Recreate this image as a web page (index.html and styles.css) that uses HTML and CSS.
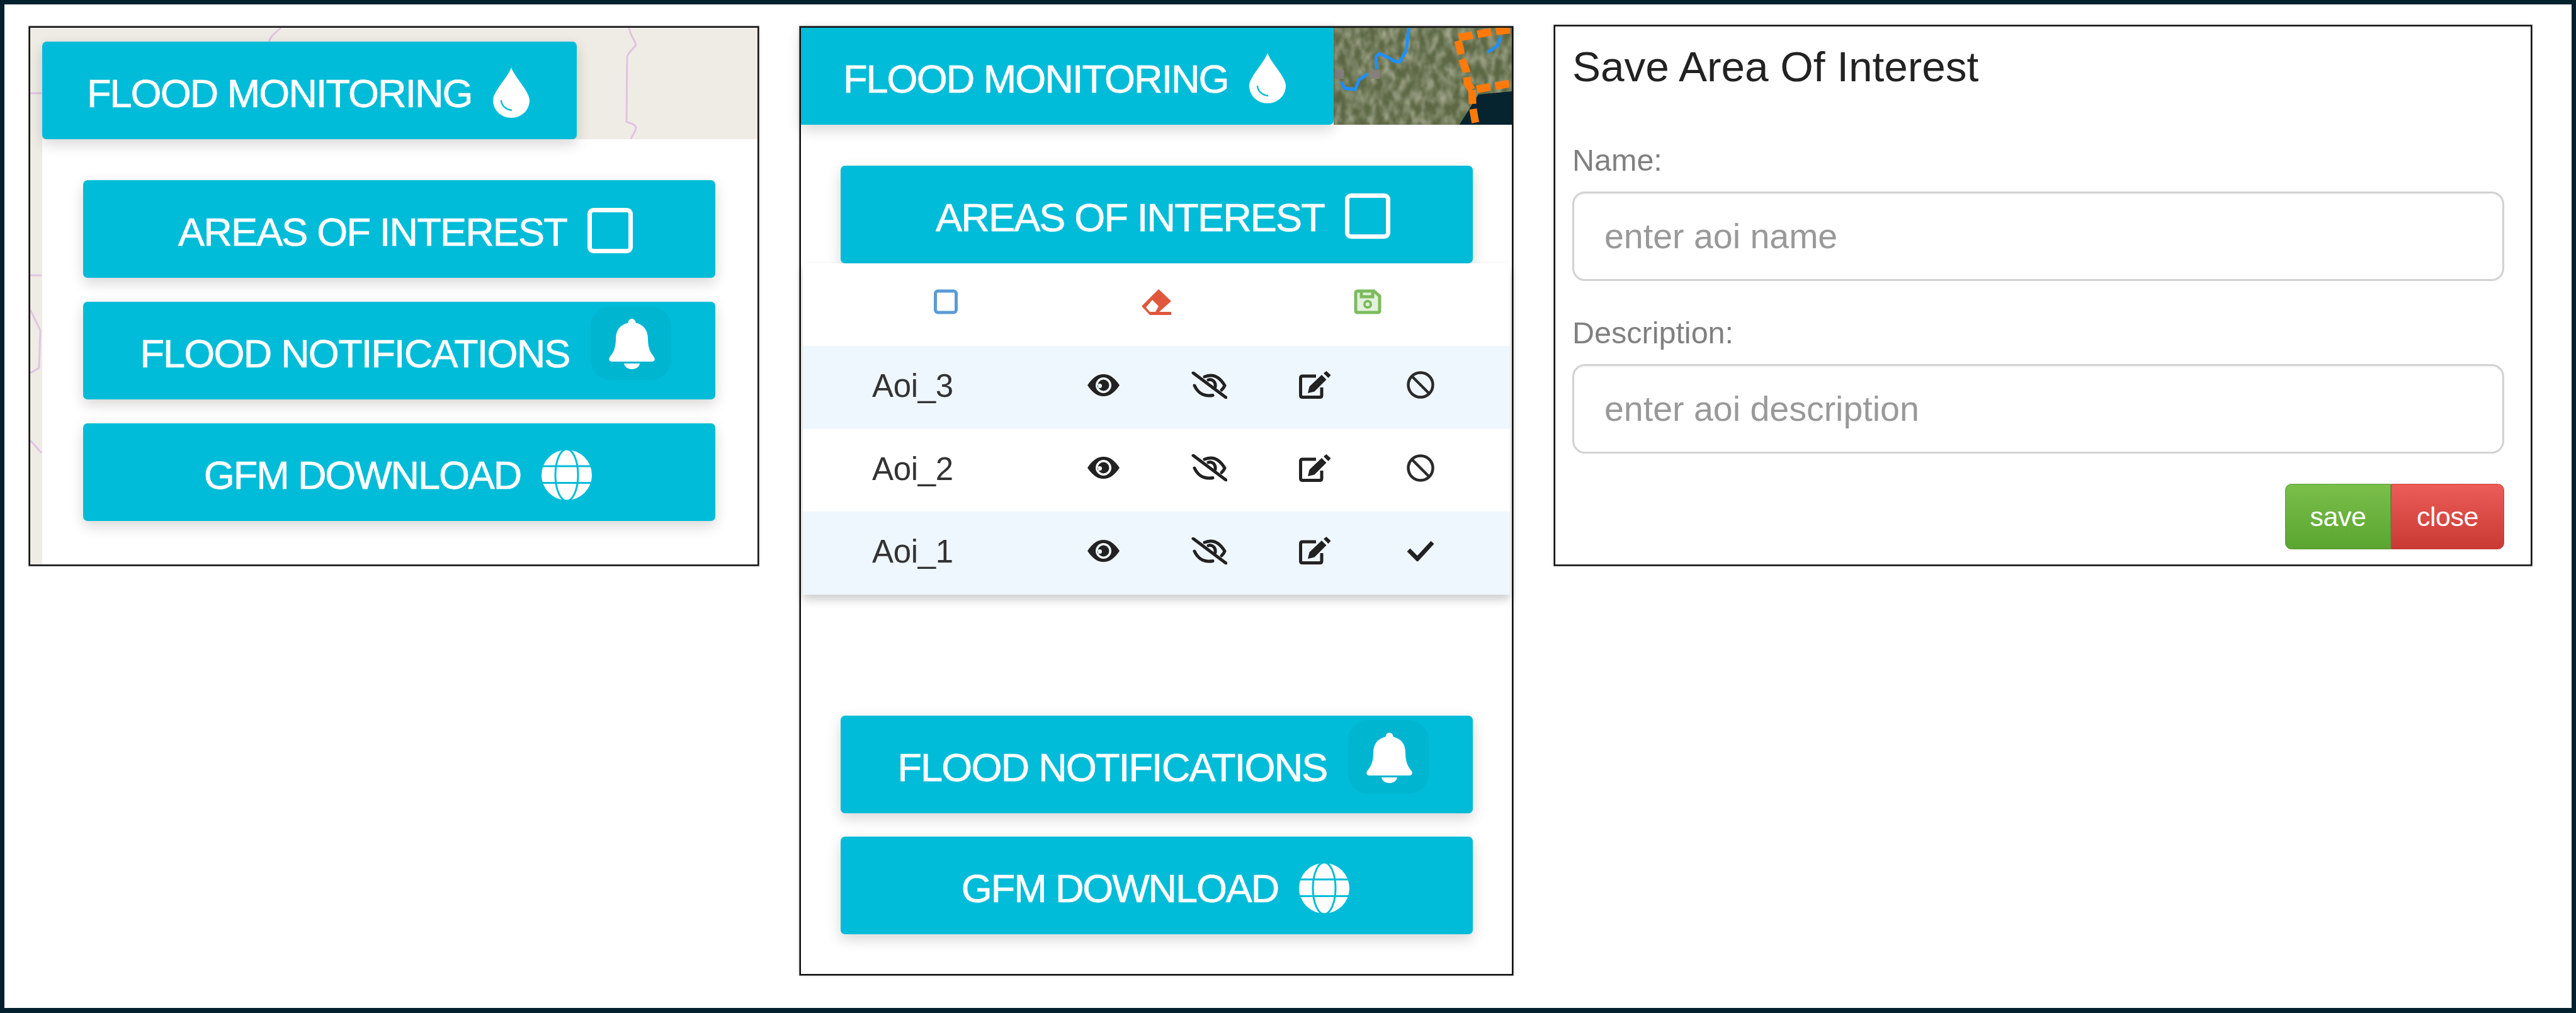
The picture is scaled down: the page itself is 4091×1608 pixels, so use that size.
FILE: index.html
```html
<!DOCTYPE html>
<html lang="en">
<head>
<meta charset="utf-8">
<title>Flood Monitoring</title>
<link rel="stylesheet" href="styles.css">
</head>
<body>
<svg class="defs" width="0" height="0" aria-hidden="true">
  <defs>
    <symbol id="i-drop" viewBox="0 0 58 80">
      <path fill="#fff" d="M29 0C25 14 0 38 0 52C0 68 13 80 29 80C45 80 58 68 58 52C58 38 33 14 29 0Z"/>
      <path fill="none" stroke="#00bcd8" stroke-width="2.4" d="M13 52C13 60 20 67 30 68"/>
    </symbol>
    <symbol id="i-square" viewBox="0 0 72 72">
      <rect x="3.500" y="3.500" width="65" height="65" rx="6" fill="none" stroke="#fff" stroke-width="7"/>
    </symbol>
    <symbol id="i-bell" viewBox="0 0 73 80">
      <path fill="#fff" d="M36.500 0C33 0 30.500 3 30.500 6.500C17 9.500 11 19 11 32C11 48 6 55 1.500 60.500C-1 64 .5 68 4 68H69C72.500 68 74 64 71.500 60.500C67 55 62 48 62 32C62 19 56 9.500 42.500 6.500C42.500 3 40 0 36.500 0Z"/>
      <path fill="#fff" d="M24 71H49C48.500 76 43 80 36.500 80S24.500 76 24 71Z"/>
    </symbol>
    <symbol id="i-globe" viewBox="0 0 80 80">
      <circle cx="40" cy="40" r="40" fill="#fff"/>
      <g fill="none" stroke="#00bcd8" stroke-width="3">
        <ellipse cx="40" cy="40" rx="18" ry="41"/>
        <path d="M0 26H80M0 52.500H80"/>
      </g>
    </symbol>
    <symbol id="i-eye" viewBox="0 0 51 35">
      <path fill="#222" fill-rule="evenodd" d="M0 17.500C8 5.500 16 0 25.500 0S43 5.500 51 17.500C43 29.500 35 35 25.500 35S8 29.500 0 17.500ZM25.500 5A12.500 12.500 0 1 0 25.500 30A12.500 12.500 0 1 0 25.500 5Z"/>
      <path fill="#222" fill-rule="evenodd" d="M25.500 8.500A9 9 0 1 1 25.500 26.500A9 9 0 1 1 25.500 8.500ZM19.500 15A3.500 3.500 0 1 0 19.500 22A3.500 3.500 0 1 0 19.500 15Z"/>
    </symbol>
    <symbol id="i-eye-off" viewBox="0 0 57 43">
      <g fill="none" stroke="#222" stroke-width="5" stroke-linecap="round">
        <path d="M3 2L55 41"/>
        <path d="M21 8C25 6.500 28 6 31 6C39 6 47 12 53 22C52 25 50 27 48 29"/>
        <path d="M5 22C9 31 17 38 28 38C30 38 32 38 34 37.500"/>
        <path d="M27 13C32 11 39 15 38 24"/>
      </g>
    </symbol>
    <symbol id="i-edit" viewBox="0 0 51 44">
      <path fill="none" stroke="#222" stroke-width="5" d="M27 8H5.500Q2.500 8 2.500 11V38.500Q2.500 41.500 5.500 41.500H33Q36 41.500 36 38.500V26"/>
      <path fill="#222" d="M14 35L16.500 24.500L36 6L43.500 13.500L24.500 32.500ZM39 3.500L43.500 0L50.500 6.500L46.500 11Z"/>
    </symbol>
    <symbol id="i-ban" viewBox="0 0 44 44">
      <circle cx="22" cy="22" r="19.500" fill="none" stroke="#2a2a2a" stroke-width="4.500"/>
      <path d="M8.500 8.500L35.500 35.500" stroke="#2a2a2a" stroke-width="4.500"/>
    </symbol>
    <symbol id="i-check" viewBox="0 0 44 33">
      <path d="M3 15L17 29L41 3" fill="none" stroke="#222" stroke-width="7"/>
    </symbol>
  </defs>
</svg>

<main class="frame">

  <section class="panel panel-menu">
    <svg class="basemap" width="1155" height="852" viewBox="0 0 1155 852" aria-hidden="true">
      <g fill="none" stroke="#e0c4e0" stroke-width="3">
        <path d="M951 0C953 12 960 20 962 27C958 34 950 38 948 46L947 149C952 152 960 152 962 158C962 165 956 170 954 177"/>
        <path d="M398 0C390 8 380 14 379 24"/>
        <path d="M0 104H18M0 393H18M0 448L16 480L14 540L0 548M0 655L18 675"/>
      </g>
    </svg>
    <div class="head">
      <div class="btn btn-title btn-title-left">
        <span class="label">FLOOD MONITORING</span>
        <svg class="ico-drop"><use href="#i-drop"/></svg>
      </div>
    </div>
    <div class="sheet">
      <div class="btn">
        <span class="label">AREAS OF INTEREST</span>
        <svg class="ico-square"><use href="#i-square"/></svg>
      </div>
      <div class="btn">
        <span class="label">FLOOD NOTIFICATIONS</span>
        <span class="bell-box"><svg class="ico-bell"><use href="#i-bell"/></svg></span>
      </div>
      <div class="btn btn-gfm">
        <span class="label">GFM DOWNLOAD</span>
        <svg class="ico-globe"><use href="#i-globe"/></svg>
      </div>
    </div>
  </section>

  <section class="panel panel-list">
    <div class="head-list">
      <div class="btn btn-title btn-title-mid">
        <span class="label">FLOOD MONITORING</span>
        <svg class="ico-drop"><use href="#i-drop"/></svg>
      </div>
      <svg class="satellite" viewBox="0 0 282 154" preserveAspectRatio="none" aria-hidden="true">
        <defs>
          <filter id="land" x="0" y="0" width="100%" height="100%">
            <feTurbulence type="fractalNoise" baseFrequency="0.09 0.05" numOctaves="3" seed="7"/>
            <feColorMatrix type="matrix" values="0 0 0 0 0.68  0 0 0 0 0.68  0 0 0 0 0.56  1.2 0 0 0 -0.42"/>
            <feGaussianBlur stdDeviation="1.500"/>
          </filter>
        </defs>
        <rect width="282" height="154" fill="#5c6844"/>
        <rect width="282" height="154" filter="url(#land)"/>
        <path fill="#06242f" d="M199 154L229 106L282 101V154Z"/>
        <g fill="none" stroke-linejoin="round">
          <path stroke="#ff7a0a" stroke-width="12" stroke-dasharray="22 8" d="M279 3L252 6L225 11L195 16L200 33L202 46L210 69L212 89L219 99L282 88"/>
          <path stroke="#ff7a0a" stroke-width="12" stroke-dasharray="22 8" d="M219 99L220 126L225 154"/>
          <path stroke="#1e90ff" stroke-width="5" d="M119 0L115 36L105 54L95 53L90 49L72 41L67 46L68 66"/>
          <path stroke="#1e90ff" stroke-width="5" d="M54 73L40 83L34 98L17 96L12 86"/>
          <path stroke="#1e90ff" stroke-width="5" stroke-linecap="round" d="M264 16L259 29L245 38"/>
        </g>
        <rect x="59" y="67" width="14" height="14" fill="#85807f"/>
        <rect x="2" y="67" width="14" height="14" fill="#85807f"/>
      </svg>
    </div>
    <div class="btn btn-mid btn-aoi">
      <span class="label">AREAS OF INTEREST</span>
      <svg class="ico-square"><use href="#i-square"/></svg>
    </div>
    <div class="aoi">
      <div class="aoi-tools">
        <svg class="tool" viewBox="0 0 48 41"><rect x="7.500" y="3" width="33" height="34" rx="4" fill="none" stroke="#5b9bd5" stroke-width="5"/></svg>
        <svg class="tool" viewBox="0 0 48 41"><path fill="#e0573c" fill-rule="evenodd" d="M27 0L47 19L28 36H47V41H13L0 27ZM17 17L7 29L13 36H22L27 27Z"/></svg>
        <svg class="tool" viewBox="0 0 48 41"><g fill="none" stroke="#7cbb5e"><path fill="#e3f1dc" stroke-width="5" d="M9 3H34L43 11V34Q43 37 40 37H8Q5 37 5 34V6Q5 3 9 3Z"/><path stroke-width="5" d="M14 5V12H32V5"/><circle cx="24" cy="24" r="5" stroke-width="4"/></g></svg>
      </div>
      <div class="aoi-row row-tint">
        <span class="aoi-name">Aoi_3</span>
        <svg class="ico-eye"><use href="#i-eye"/></svg>
        <svg class="ico-off"><use href="#i-eye-off"/></svg>
        <svg class="ico-edit"><use href="#i-edit"/></svg>
        <svg class="ico-ban"><use href="#i-ban"/></svg>
      </div>
      <div class="aoi-row">
        <span class="aoi-name">Aoi_2</span>
        <svg class="ico-eye"><use href="#i-eye"/></svg>
        <svg class="ico-off"><use href="#i-eye-off"/></svg>
        <svg class="ico-edit"><use href="#i-edit"/></svg>
        <svg class="ico-ban"><use href="#i-ban"/></svg>
      </div>
      <div class="aoi-row row-tint">
        <span class="aoi-name">Aoi_1</span>
        <svg class="ico-eye"><use href="#i-eye"/></svg>
        <svg class="ico-off"><use href="#i-eye-off"/></svg>
        <svg class="ico-edit"><use href="#i-edit"/></svg>
        <svg class="ico-check"><use href="#i-check"/></svg>
      </div>
    </div>
    <div class="btn btn-mid btn-notify">
      <span class="label">FLOOD NOTIFICATIONS</span>
      <span class="bell-box"><svg class="ico-bell"><use href="#i-bell"/></svg></span>
    </div>
    <div class="btn btn-mid btn-gfm btn-last">
      <span class="label">GFM DOWNLOAD</span>
      <svg class="ico-globe"><use href="#i-globe"/></svg>
    </div>
  </section>

  <section class="panel panel-form">
    <h2 class="form-title">Save Area Of Interest</h2>
    <label class="form-label form-label-first" for="aoi-name">Name:</label>
    <input class="form-input" id="aoi-name" type="text" placeholder="enter aoi name">
    <label class="form-label" for="aoi-desc">Description:</label>
    <input class="form-input" id="aoi-desc" type="text" placeholder="enter aoi description">
    <div class="form-actions">
      <button class="act act-save" type="button">save</button>
      <button class="act act-close" type="button">close</button>
    </div>
  </section>

</main>
</body>
</html>
```

FILE: styles.css
```css
* { box-sizing: border-box; }

html, body {
  margin: 0;
  padding: 0;
  background: #fff;
}

body {
  font-family: "Liberation Sans", Arial, sans-serif;
  overflow: hidden;
}

.defs { position: absolute; }

.frame {
  width: 4091px;
  height: 1608px;
  border: 7px solid #03202f;
  border-bottom-width: 8px;
  padding: 35px 0 0 39px;
  display: flex;
  align-items: flex-start;
  gap: 65px;
  background: #fff;
}

.panel {
  position: relative;
  border: 2px solid #111;
  box-shadow: 0 0 0 1px rgba(0, 0, 0, .55), 0 0 5px rgba(0, 0, 0, .2);
  flex: none;
  background: #fff;
}

.panel-menu {
  width: 1159px;
  height: 856px;
  background: #efece6;
  overflow: hidden;
}

.panel-list {
  width: 1133px;
  height: 1506px;
}

.panel-form {
  width: 1553px;
  height: 858px;
  margin-top: -2px;
  padding: 26px 42px 0 27px;
}

.basemap {
  position: absolute;
  left: 0;
  top: 0;
}

/* buttons */
.btn {
  position: relative;
  height: 155px;
  padding: 9px 0 0 20px;
  display: flex;
  align-items: center;
  justify-content: center;
  gap: 33px;
  flex: none;
  width: 1004px;
  background: #00bcd8;
  border-radius: 7px;
  box-shadow: 0 8px 22px rgba(0, 0, 0, .16);
  color: #fff;
}

.label {
  font-size: 63px;
  line-height: 72px;
  letter-spacing: -1.800px;
  -webkit-text-stroke: .7px #fff;
  white-space: nowrap;
}

.btn-gfm { padding-left: 0; padding-right: 4px; }
.btn-gfm .label { letter-spacing: -2.100px; }

.btn-title { justify-content: flex-start; padding-top: 8px; z-index: 2; }
.btn-title .label { letter-spacing: -1.950px; }
.btn-title-left {
  width: 849px;
  margin-left: 19px;
  padding-left: 71px;
}
.btn-title-mid {
  width: 846px;
  height: 154px;
  padding-left: 67px;
  border-radius: 0 0 7px 0;
}

.head { padding-top: 22px; position: relative; z-index: 2; }

.head-list { display: flex; height: 154px; }

.satellite { flex: 1; min-width: 0; height: 154px; display: block; }

.sheet {
  position: relative;
  height: 675px;
  margin-left: 19px;
  padding: 65px 0 0 65px;
  background: #fff;
  display: flex;
  flex-direction: column;
  gap: 38px;
}

.btn-mid { margin-left: 63px; }
.btn-aoi { margin-top: 65px; }
.btn-notify { margin-top: 192px; }
.btn-last { margin-top: 37px; }

/* icons in buttons */
.ico-drop { width: 58px; height: 80px; flex: none; margin-top: -2px; }
.ico-square { width: 72px; height: 72px; flex: none; margin-top: -4px; }
.ico-globe { width: 80px; height: 80px; flex: none; }
.ico-bell { width: 73px; height: 80px; }

.bell-box {
  flex: none;
  align-self: flex-start;
  width: 128px;
  height: 117px;
  margin-top: -2px;
  border-radius: 32px;
  background: #00b5cf;
  display: flex;
  justify-content: center;
  padding: 20px 0 0 4px;
}

/* AOI list */
.aoi {
  position: relative;
  z-index: 1;
  margin: 0 3px;
  background: #fff;
  box-shadow: 0 8px 14px rgba(0, 0, 0, .2);
}

.aoi-tools {
  height: 131px;
  display: flex;
  align-items: center;
  justify-content: center;
  gap: 287px;
  padding-bottom: 9px;
}

.tool { width: 48px; height: 41px; flex: none; }

.aoi-row {
  display: grid;
  grid-template-columns: 283px repeat(4, 168px);
  align-items: center;
  justify-items: center;
  height: 131.500px;
  padding: 0 0 7px 110px;
}

.row-tint { background: #eff7fe; }

.aoi-name {
  justify-self: start;
  font-size: 51px;
  line-height: 60px;
  letter-spacing: -.3px;
  color: #333;
  margin-top: 4px;
}

.ico-eye { width: 51px; height: 35px; }
.ico-off { width: 57px; height: 43px; }
.ico-edit { width: 51px; height: 44px; }
.ico-ban { width: 44px; height: 44px; }
.ico-check { width: 44px; height: 33px; }

/* form */
.form-title {
  margin: 0;
  font-size: 67.500px;
  line-height: 76px;
  font-weight: 400;
  color: #222;
}

.form-label {
  display: block;
  margin-top: 54px;
  font-size: 48.500px;
  line-height: 56px;
  color: #808080;
}

.form-label-first { margin-top: 82px; }

.form-input {
  display: block;
  width: 100%;
  height: 142px;
  margin-top: 22px;
  padding: 0 48px;
  border: 3px solid #d2d2d2;
  border-radius: 20px;
  background: #fff;
  box-shadow: inset 0 2px 2px rgba(0, 0, 0, .04);
  font-family: inherit;
  font-size: 55.500px;
  color: #333;
  outline: none;
}

.form-input::placeholder { color: #999; opacity: 1; }

.form-actions {
  display: flex;
  justify-content: flex-end;
  margin-top: 48px;
}

.act {
  height: 104px;
  border: 0;
  padding: 0;
  font-family: inherit;
  font-size: 43px;
  letter-spacing: -.5px;
  color: #fff;
}

.act-save {
  width: 168px;
  border-radius: 10px 0 0 10px;
  border: 1px solid #549a30;
  background: linear-gradient(#7abf4a, #5aa531);
}

.act-close {
  width: 180px;
  border-radius: 0 10px 10px 0;
  border: 1px solid #c9413c;
  background: linear-gradient(#ec5c58, #c93a34);
}
```
